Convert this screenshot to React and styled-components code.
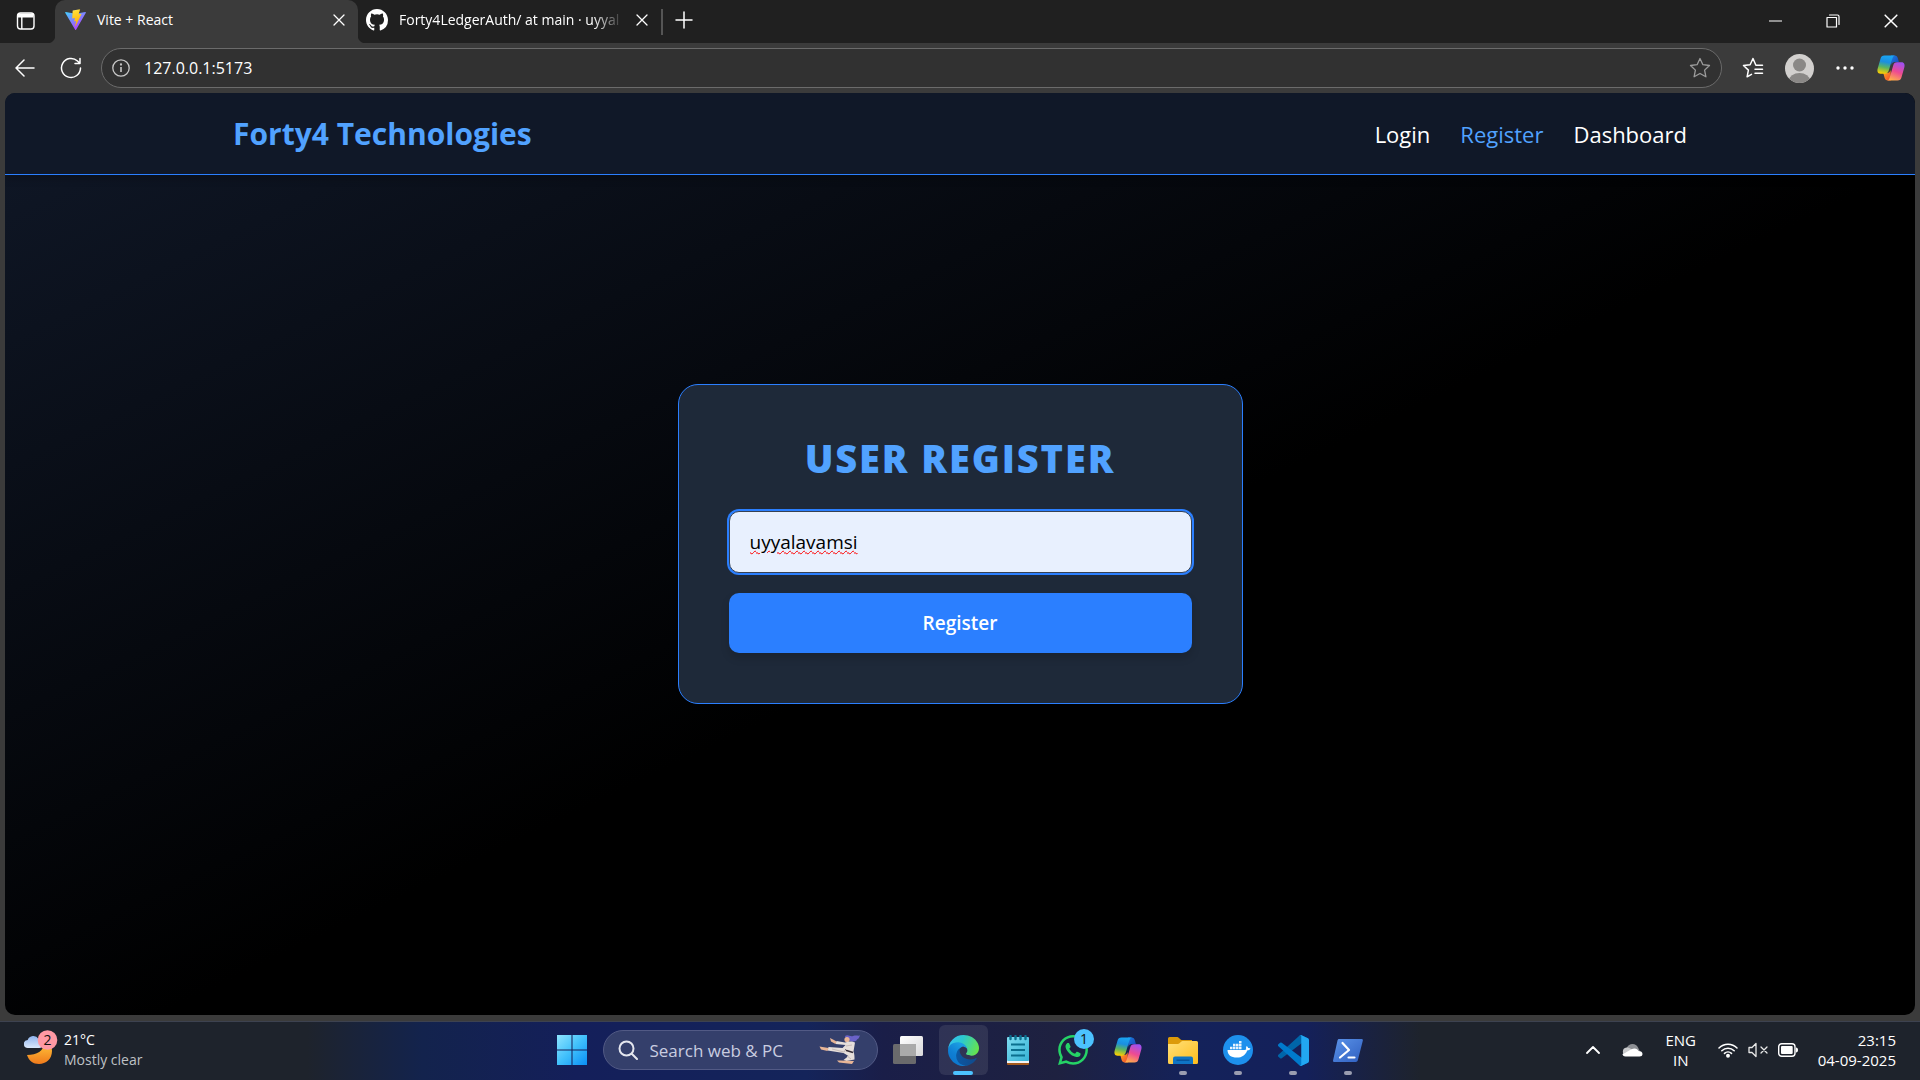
import React, { useState } from 'react';
import styled, { createGlobalStyle } from 'styled-components';

const Global = createGlobalStyle`
  *, *::before, *::after { box-sizing: border-box; }
  html, body, #root { height: 100%; }
  body { margin: 0; background: #000; color: #fff; font-family: "Open Sans", "Noto Sans", sans-serif; }
  button, input { font: inherit; color: inherit; margin: 0; }
  button { background: none; border: 0; padding: 0; cursor: pointer; }
  svg { display: block; flex: none; }
`;

/* ---------- window ---------- */
const Screen = styled.div`
  min-height: 100vh;
  display: flex;
  flex-direction: column;
`;
const Browser = styled.div`
  flex: 1;
  display: flex;
  flex-direction: column;
  background: #3b3b3b;
`;
const TabStrip = styled.div`
  height: 43px;
  display: flex;
  background: #202020;
`;
const TabMenu = styled.button`
  width: 55px;
  display: grid;
  place-items: center;
  padding: 0 4px 2px 0;
`;
const Tab = styled.div`
  position: relative;
  width: 303px;
  display: flex;
  align-items: center;
  gap: 11px;
  padding: 0 12px 4px ${(p) => (p.$active ? 10 : 8)}px;
  border-radius: 10px 10px 0 0;
  background: ${(p) => (p.$active ? '#3b3b3b' : 'transparent')};
  &::before, &::after {
    content: '';
    display: ${(p) => (p.$active ? 'block' : 'none')};
    position: absolute;
    bottom: 0;
    width: 8px;
    height: 8px;
  }
  &::before { right: 100%; background: radial-gradient(circle at 0 0, transparent 8px, #3b3b3b 9px); }
  &::after { left: 100%; background: radial-gradient(circle at 100% 0, transparent 8px, #3b3b3b 9px); }
`;
const TabTitle = styled.span`
  flex: 1;
  font-size: 14px;
  line-height: 20px;
  white-space: nowrap;
  mask-image: ${(p) => (p.$fade ? 'linear-gradient(90deg, #000 86%, transparent)' : 'none')};
`;
const IconButton = styled.button`
  display: grid;
  place-items: center;
  width: ${(p) => p.$w}px;
  height: ${(p) => p.$h}px;
`;
const TabDivider = styled.span`
  width: 2px;
  height: 26px;
  margin-top: 9px;
  background: #555;
`;
const WindowControls = styled.div`
  margin-left: auto;
  display: flex;
`;
const Toolbar = styled.div`
  height: 50px;
  display: flex;
  align-items: center;
  padding: 0 6px 0 2px;
`;
const AddressBar = styled.label`
  flex: 1;
  height: 40px;
  margin-left: 7px;
  display: flex;
  align-items: center;
  gap: 14px;
  padding: 0 10px;
  border: 1px solid #6b6b6b;
  border-radius: 20px;
  background: #313131;
`;
const AddressInput = styled.input`
  flex: 1;
  border: 0;
  outline: 0;
  padding: 0;
  background: transparent;
  font-size: 16px;
  line-height: 24px;
`;
const ToolbarActions = styled.div`
  display: flex;
  align-items: center;
  margin-left: 8px;
`;

/* ---------- site ---------- */
const Page = styled.div`
  flex: 1;
  margin: 0 5px 6px;
  display: flex;
  flex-direction: column;
  border-radius: 10px;
  overflow: hidden;
  background: linear-gradient(to bottom right, #101828, #000 54%, #000);
`;
const Header = styled.header`
  height: 82px;
  background: #101828;
  border-bottom: 1px solid #2b7fff;
  box-shadow: 0 4px 8px rgba(0, 0, 0, 0.2);
`;
const HeaderInner = styled.div`
  height: 100%;
  max-width: 1534px;
  margin: 0 auto;
  padding: 0 40px;
  display: flex;
  align-items: center;
  justify-content: space-between;
`;
const Brand = styled.h1`
  margin: 0;
  font-size: 30px;
  line-height: 40px;
  font-weight: 700;
  color: #51a2ff;
`;
const Nav = styled.nav`
  display: flex;
  gap: 30px;
`;
const NavLink = styled.a`
  font-size: 22px;
  line-height: 30px;
  text-decoration: none;
  color: ${(p) => (p.$active ? '#51a2ff' : '#fff')};
`;
const Main = styled.main`
  flex: 1;
  display: grid;
  place-items: center;
  align-content: center;
  padding: 20px 20px 122px;
`;
const Card = styled.form`
  width: 100%;
  max-width: 565px;
  padding: 50px;
  display: flex;
  flex-direction: column;
  gap: 20px;
  border: 1px solid #2b7fff;
  border-radius: 20px;
  background: #1e2939;
`;
const CardTitle = styled.h2`
  margin: 0 0 10px;
  text-align: center;
  text-transform: uppercase;
  font-size: 38px;
  line-height: 46px;
  font-weight: 800;
  letter-spacing: 0.05em;
  color: #51a2ff;
`;
const UserInput = styled.input`
  width: 100%;
  height: 62px;
  padding: 0 20px;
  border: 1px solid #364153;
  border-radius: 10px;
  outline: 0;
  box-shadow: 0 0 0 2px #2b7fff;
  background: #e8f0fe;
  color: #000;
  font-size: 19px;
  text-decoration: underline wavy #f00 1px;
`;
const SubmitButton = styled.button`
  height: 60px;
  border-radius: 10px;
  background: #2b7fff;
  color: #fff;
  font-size: 19px;
  font-weight: 600;
  box-shadow: 0 5px 8px rgba(0, 0, 0, 0.15);
`;

/* ---------- taskbar ---------- */
const Taskbar = styled.footer`
  height: 59px;
  display: grid;
  grid-template-columns: 1fr auto 1fr;
  align-items: center;
  padding-bottom: 2px;
  border-top: 1px solid #3d4250;
  background: linear-gradient(90deg, #1e232c 0%, #1e232c 16%, #13234d 22%, #141f5a 30%, #14245a 42%, #1a1e48 46%, #1e2140 55%, #14225a 62%, #14205a 68%, #1e232c 74%, #1e232c 100%);
`;
const Weather = styled.button`
  justify-self: start;
  display: flex;
  gap: 6px;
  padding-left: 24px;
  text-align: left;
  font-size: 14px;
  line-height: 20px;
`;
const Muted = styled.div`
  color: #bfc1c5;
`;
const Apps = styled.div`
  display: flex;
  align-items: center;
  gap: 6px;
`;
const AppButton = styled.button`
  width: 49px;
  height: 50px;
  display: grid;
  place-items: center;
  position: relative;
  border-radius: 6px;
  background: ${(p) => (p.$active ? 'rgba(255,255,255,.09)' : 'transparent')};
  &::after {
    content: '';
    position: absolute;
    bottom: 0;
    width: ${(p) => (p.$active ? 20 : 8)}px;
    height: 4px;
    border-radius: 2px;
    background: ${(p) => (p.$active ? '#4cc2ff' : p.$running ? '#9a9db0' : 'transparent')};
  }
`;
const Search = styled.label`
  width: 275px;
  height: 40px;
  display: flex;
  align-items: center;
  gap: 12px;
  padding: 0 16px 0 14px;
  border: 1px solid #525a85;
  border-radius: 20px;
  background: #343f6b;
`;
const SearchInput = styled.input`
  flex: 1;
  min-width: 0;
  border: 0;
  outline: 0;
  padding: 0;
  background: transparent;
  font-size: 17px;
  &::placeholder { color: #c9cde0; opacity: 1; }
`;
const Tray = styled.div`
  justify-self: end;
  display: flex;
  align-items: center;
  padding-right: 24px;
  font-size: 15px;
  line-height: 20px;
`;
const Language = styled.button`
  width: 58px;
  text-align: center;
`;
const Status = styled.button`
  display: flex;
  align-items: center;
  gap: 10px;
  margin: 0 20px 0 8px;
`;
const Clock = styled.button`
  text-align: right;
`;

/* ---------- drawings ---------- */
const Line = ({ w, h = w, box, d, color = '#fff', sw = 1.5 }) => (
  <svg width={w} height={h} viewBox={box || `0 0 ${w} ${h}`} fill="none" stroke={color} strokeWidth={sw} strokeLinecap="round" strokeLinejoin="round"><path d={d} /></svg>
);
const CloseIcon = ({ s = 12 }) => <Line w={s} box="0 0 12 12" d="M1 1l10 10M11 1L1 11" sw={1.3} />;
const TabsIcon = () => (
  <svg width="20" height="20" viewBox="0 0 20 20" fill="none" stroke="#fff" strokeWidth="1.4"><rect x="1.5" y="2" width="16.5" height="16" rx="3" /><path d="M2 4.5h15.5" strokeWidth="4" /><path d="M5.8 6v12" /></svg>
);
const ViteIcon = () => (
  <svg width="21" height="21" viewBox="0 0 32 32">
    <defs>
      <linearGradient id="va" x1="0" y1="0" x2="0.7" y2="1"><stop stopColor="#41d1ff" /><stop offset="1" stopColor="#bd34fe" /></linearGradient>
      <linearGradient id="vb" x1="0.4" y1="0" x2="0.6" y2="1"><stop stopColor="#ffea83" /><stop offset=".1" stopColor="#ffdd35" /><stop offset="1" stopColor="#ffa800" /></linearGradient>
    </defs>
    <path d="M31.8 5.7L16.9 31.6c-.3.5-1.1.5-1.4 0L.3 5.7c-.3-.6.2-1.3.8-1.2l15 2.6 14.8-2.6c.7-.1 1.2.6.9 1.2z" fill="url(#va)" />
    <path d="M23 .2L12 2.3c-.2 0-.3.2-.3.4L11 14c0 .3.2.5.5.4l3-.7c.3 0 .6.2.5.5l-.9 4.3c-.1.3.2.6.5.5l1.8-.6c.3-.1.6.2.5.5l-1.4 6.8c-.1.4.4.7.7.3l8.8-18.1c.2-.3-.1-.6-.5-.6l-3 .6c-.3.1-.5-.2-.5-.5l2-6.8c.1-.3-.1-.5-.5-.4z" fill="url(#vb)" />
  </svg>
);
const GithubIcon = () => (
  <svg width="22" height="22" viewBox="0 0 16 16" fill="#fff"><path d="M8 0C3.58 0 0 3.58 0 8c0 3.54 2.29 6.53 5.47 7.59.4.07.55-.17.55-.38 0-.19-.01-.82-.01-1.49-2.01.37-2.53-.49-2.69-.94-.09-.23-.48-.94-.82-1.13-.28-.15-.68-.52-.01-.53.63-.01 1.08.58 1.23.82.72 1.21 1.87.87 2.33.66.07-.52.28-.87.51-1.07-1.78-.2-3.64-.89-3.64-3.95 0-.87.31-1.59.82-2.15-.08-.2-.36-1.02.08-2.12 0 0 .67-.21 2.2.82a7.6 7.6 0 0 1 4 0c1.53-1.04 2.2-.82 2.2-.82.44 1.1.16 1.92.08 2.12.51.56.82 1.27.82 2.15 0 3.07-1.87 3.75-3.65 3.95.29.25.54.73.54 1.48 0 1.07-.01 1.93-.01 2.2 0 .21.15.46.55.38A8 8 0 0 0 16 8c0-4.42-3.58-8-8-8z" /></svg>
);
const InfoIcon = () => (
  <svg width="18" height="18" viewBox="0 0 18 18" fill="none" stroke="#c8c8c8" strokeWidth="1.3"><circle cx="9" cy="9" r="8.2" /><path d="M9 8v5" strokeWidth="1.6" /><circle cx="9" cy="5.5" r=".5" /></svg>
);
const Avatar = () => (
  <svg width="29" height="29" viewBox="0 0 29 29"><defs><clipPath id="av"><circle cx="14.5" cy="14.5" r="14.5" /></clipPath></defs><g clipPath="url(#av)"><path d="M0 0h29v29H0z" fill="#d2d0ce" /><circle cx="14.5" cy="11" r="6.5" fill="#8a8886" /><ellipse cx="14.5" cy="26.5" rx="10.5" ry="7.5" fill="#8a8886" /></g></svg>
);
const Dots = () => (
  <svg width="18" height="4" viewBox="0 0 18 4" fill="#fff"><circle cx="2" cy="2" r="1.7" /><circle cx="9" cy="2" r="1.7" /><circle cx="16" cy="2" r="1.7" /></svg>
);
const CopilotIcon = ({ id, s = 28 }) => (
  <svg width={s} height={s} viewBox="0 0 28 28">
    <defs>
      <linearGradient id={id + 'a'} x1="0.5" y1="0" x2="0.3" y2="1"><stop stopColor="#1aa5f2" /><stop offset=".35" stopColor="#1b8fe0" /><stop offset=".65" stopColor="#5cb560" /><stop offset="1" stopColor="#ffd000" /></linearGradient>
      <linearGradient id={id + 'b'} x1="0.7" y1="0" x2="0.3" y2="1"><stop stopColor="#a050f0" /><stop offset=".5" stopColor="#ee4a92" /><stop offset="1" stopColor="#ffb04a" /></linearGradient>
      <linearGradient id={id + 'c'} x1="0" y1="0" x2="1" y2="1"><stop stopColor="#1b7de0" /><stop offset="1" stopColor="#1a44b8" /></linearGradient>
      <linearGradient id={id + 'd'} x1="0" y1="0" x2="1" y2="1"><stop stopColor="#ffb020" /><stop offset="1" stopColor="#f0452e" /></linearGradient>
    </defs>
    <path d="M14 1.5h3.500c2 0 2.900 1.300 3.400 3l1 3.500h-4c-2 0-3 1-3.500 3z" fill={`url(#${id}c)`} />
    <path d="M14 26.500h-3c-2 0-3-1.300-3.500-3L6.300 19H10c2 0 3-1 3.600-3z" fill={`url(#${id}d)`} />
    <path d="M7.500 1.500h10.800c-1.600 0-2.300 1-2.900 3l-3.600 12c-.7 2-1.500 3.200-4 3.200H3.500C.5 19.700 0 17 .7 14.500L3.500 4.800c.6-2.200 1.700-3.300 4-3.300z" fill={`url(#${id}a)`} />
    <path d="M20.500 26.500H9.800c1.600 0 2.300-1 2.900-3l3.500-12c.7-2 1.500-3.200 4-3.200h4.300c3 0 3.500 2.700 2.800 5.200l-2.800 9.700c-.6 2.200-1.700 3.300-4 3.300z" fill={`url(#${id}b)`} />
  </svg>
);
const WeatherIcon = () => (
  <svg width="34" height="36" viewBox="0 0 34 36">
    <defs><linearGradient id="mo" x1="0" y1="0" x2="0" y2="1"><stop stopColor="#ffc53a" /><stop offset="1" stopColor="#f07a1c" /></linearGradient><linearGradient id="cl" x1="0" y1="0" x2="0" y2="1"><stop stopColor="#8fb4ee" /><stop offset="1" stopColor="#dbe8fb" /></linearGradient></defs>
    <path d="M20 13c0 8-7 12-17 12 2 6 6 9 12 9 7 0 13-5 13-13 0-3-1-5-2-7z" fill="url(#mo)" />
    <path d="M4 18a4 4 0 0 1-.3-8A6 6 0 0 1 14.500 9c3 0 4.500 2 4.500 4.500S17.500 18 15 18z" fill="url(#cl)" />
    <circle cx="23.500" cy="10" r="9.800" fill="#ff99a4" />
    <text x="23.500" y="15" textAnchor="middle" fontSize="14" fill="#111" fontFamily="Open Sans">2</text>
  </svg>
);
const WindowsIcon = () => (
  <svg width="30" height="30" viewBox="0 0 29 29"><defs><linearGradient id="wi" gradientUnits="userSpaceOnUse" x1="0" y1="0" x2="29" y2="29"><stop stopColor="#8fe4ff" /><stop offset=".5" stopColor="#40c0fb" /><stop offset="1" stopColor="#0a8ff5" /></linearGradient></defs><path d="M0 0h14v14H0zM15 0h14v14H15zM0 15h14v14H0zM15 15h14v14H15z" fill="url(#wi)" /></svg>
);
const KarateIcon = () => (
  <svg width="42" height="30" viewBox="0 0 42 30">
    <path d="M26 1c3-2 5 1 8 0s5 0 7-.5c-1 2-1 3-3 4 0 1-2 2-4 2-3 0-5-2-7-2z" fill="#6a62c8" />
    <circle cx="28" cy="4.500" r="2.600" fill="#e8b596" />
    <path d="M26 7.500c3-1.500 8-1.500 10 0l-1.500 9c1 3 1 5 1 8l-8 1.500-3-1 5-4-5-3-16-2.500 1-3.500 14 1 3-3-10-1 1-3z" fill="#e6dfdb" />
    <path d="M26 15l8 2.500" stroke="#332b35" strokeWidth="1.600" />
    <path d="M16.500 9L12 6.500 11 3l3 1.500 3.500 2zM8.500 16L2 14.500.5 11.500l3 .5 6 1zM21 25.500h-3l2 2 13 1.500 2-3z" fill="#e8b596" />
    <path d="M13 14l12 3 3-3M27 11l6-1M28 21l4 3" stroke="#c7bcb8" strokeWidth="1" fill="none" />
  </svg>
);
const TaskViewIcon = () => (
  <svg width="30" height="28" viewBox="0 0 30 28"><defs><linearGradient id="tv" x1="0" y1="0" x2="1" y2="1"><stop stopColor="#fff" /><stop offset="1" stopColor="#d8d8da" /></linearGradient></defs><rect y="8" width="23" height="20" rx="1.500" fill="#6a6a6c" /><rect x="7" width="23" height="20" rx="1.500" fill="url(#tv)" /><path d="M7 8h16v12H7z" fill="#aaa" /></svg>
);
const EdgeIcon = () => (
  <svg width="31" height="31" viewBox="0 0 256 256">
    <defs>
      <linearGradient id="ea" x1="0" y1=".5" x2="1" y2=".6"><stop stopColor="#0c59a4" /><stop offset="1" stopColor="#114a8b" /></linearGradient>
      <linearGradient id="eb" x1=".7" y1=".2" x2=".2" y2="1"><stop stopColor="#1b9de2" /><stop offset=".5" stopColor="#0f7fd4" /><stop offset="1" stopColor="#0b73c9" /></linearGradient>
      <linearGradient id="ec" x1="0" y1=".3" x2="1" y2=".6"><stop stopColor="#35c1f1" /><stop offset=".4" stopColor="#2cc9cf" /><stop offset="1" stopColor="#66e34c" /></linearGradient>
    </defs>
    <path d="M231 190.500c-3.400 1.800-6.900 3.400-10.500 4.700a101.700 101.700 0 0 1-36 6.500c-47.300 0-88.600-32.500-88.600-74.400 0-11.400 6.400-22 16.700-27.400-42.800 1.800-53.800 46.400-53.800 72.600 0 73.900 68.100 81.400 82.800 81.400 7.900 0 19.800-2.300 27-4.600l1.300-.4a128.300 128.300 0 0 0 66.600-52.800c2-3-2-7.500-5.500-5.600z" fill="url(#ea)" />
    <path d="M105.700 241.400A79.200 79.200 0 0 1 83 220.100 80.700 80.700 0 0 1 112.600 100c3.100-1.500 8.500-4.100 15.600-4a32.400 32.400 0 0 1 25.700 13 31.900 31.900 0 0 1 6.300 18.700c0-.2 24.500-79.600-80-79.600-43.900 0-80 41.600-80 78.200-.2 19.300 4 38.500 12.100 56a128 128 0 0 0 156.400 67 75.500 75.500 0 0 1-62-8z" fill="url(#eb)" />
    <path d="M152.300 148.900c-.8 1-3.300 2.500-3.300 5.700 0 2.600 1.700 5.100 4.700 7.200 14.400 10 41.500 8.700 41.600 8.700a59.600 59.600 0 0 0 30.300-8.400A61.400 61.400 0 0 0 256 109.200c.2-22.400-8-37.300-11.300-43.900C223.500 23.900 177.700 0 128 0A128 128 0 0 0 0 126.200c.5-36.500 36.800-66 80-66 3.500 0 23.500.3 42 10 16.300 8.600 24.900 18.900 30.800 29.200 6.200 10.700 7.300 24.100 7.300 29.500 0 5.300-2.700 13.300-7.800 20z" fill="url(#ec)" />
  </svg>
);
const NotepadIcon = () => (
  <svg width="24" height="31" viewBox="0 0 24 31"><defs><linearGradient id="np" x1="0" y1="0" x2="1" y2="1"><stop stopColor="#7fdcf0" /><stop offset="1" stopColor="#35b2d5" /></linearGradient></defs><path d="M1 25h22v4a1 1 0 0 1-1 1H2a1 1 0 0 1-1-1z" fill="#a55a1c" /><path d="M1 24h22v4H1z" fill="#f3f3f3" /><rect x="1" y="2" width="22" height="24" rx="1" fill="url(#np)" /><path d="M4.500 1v3M9.500 1v3M14.500 1v3M19.500 1v3" stroke="#0b6f8e" strokeWidth="2.400" strokeLinecap="round" /><path d="M5 9.500h14M5 15h14M5 20.500h14" stroke="#0b6f8e" strokeWidth="2" /></svg>
);
const WhatsappIcon = () => (
  <svg width="42" height="42" viewBox="0 0 42 42">
    <path transform="translate(6 6) scale(1.250)" fill="#25d366" d="M17.472 14.382c-.297-.149-1.758-.867-2.030-.967-.273-.099-.471-.148-.670.150-.197.297-.767.966-.940 1.164-.173.199-.347.223-.644.075-.297-.150-1.255-.463-2.390-1.475-.883-.788-1.480-1.761-1.653-2.059-.173-.297-.018-.458.130-.606.134-.133.298-.347.446-.520.149-.174.198-.298.298-.497.099-.198.050-.371-.025-.520-.075-.149-.669-1.612-.916-2.207-.242-.579-.487-.500-.669-.510-.173-.008-.371-.010-.570-.010-.198 0-.520.074-.792.372-.272.297-1.040 1.016-1.040 2.479 0 1.462 1.065 2.875 1.213 3.074.149.198 2.096 3.200 5.077 4.487.709.306 1.262.489 1.694.625.712.227 1.360.195 1.871.118.571-.085 1.758-.719 2.006-1.413.248-.694.248-1.289.173-1.413-.074-.124-.272-.198-.570-.347m-5.421 7.403h-.004a9.870 9.870 0 0 1-5.031-1.378l-.361-.214-3.741.982.998-3.648-.235-.374a9.860 9.860 0 0 1-1.510-5.260c.001-5.450 4.436-9.884 9.888-9.884 2.640 0 5.122 1.030 6.988 2.898a9.825 9.825 0 0 1 2.893 6.994c-.003 5.450-4.437 9.884-9.885 9.884m8.413-18.297A11.815 11.815 0 0 0 12.050 0C5.495 0 .160 5.335.157 11.892c0 2.096.547 4.142 1.588 5.945L.057 24l6.305-1.654a11.882 11.882 0 0 0 5.683 1.448h.005c6.554 0 11.890-5.335 11.893-11.893a11.821 11.821 0 0 0-3.480-8.413z" />
    <circle cx="32" cy="10" r="10" fill="#4cc2ff" /><text x="32" y="15" textAnchor="middle" fontSize="14" fill="#111" fontFamily="Open Sans">1</text>
  </svg>
);
const FolderIcon = () => (
  <svg width="30" height="27" viewBox="0 0 30 27"><defs><linearGradient id="fo" x1="0" y1="0" x2="1" y2="1"><stop stopColor="#ffe07a" /><stop offset="1" stopColor="#ffbd1c" /></linearGradient></defs><path d="M0 1.500A1.500 1.500 0 0 1 1.500 0h8c1 0 3 3 4 3H24v8H0z" fill="#dc9a0a" /><path d="M0 7h10c1.500 0 3-3 4.500-3h14A1.500 1.500 0 0 1 30 5.500v20a1.500 1.500 0 0 1-1.500 1.500h-27A1.500 1.500 0 0 1 0 25.500z" fill="url(#fo)" /><path d="M5 27v-5.500a2 2 0 0 1 2-2h16a2 2 0 0 1 2 2V27z" fill="#0f74c4" /><path d="M8.500 23.200h13" stroke="#064f95" strokeWidth="1.300" /></svg>
);
const DockerIcon = () => (
  <svg width="30" height="30" viewBox="0 0 30 30"><circle cx="15" cy="15" r="15" fill="#1d90ed" /><path d="M4.500 15h17c.8 0 1.500-.3 1.800-.8-.5-1.200-.2-2.500.4-3.300.9.500 1.300 1.300 1.400 2.200.9-.2 1.800 0 2.400.4-.5 1.300-1.800 1.900-3.300 1.900C22.500 20 19 22.500 14 22.500c-6 0-9.500-2.500-9.500-7.500z" fill="#fff" /><path d="M7 11.700h2.500v2.500H7zM10 11.700h2.500v2.500H10zM13 11.700h2.500v2.500H13zM16 11.700h2.500v2.500H16zM10 8.800h2.500v2.400H10zM13 8.800h2.500v2.400H13zM16 8.800h2.500v2.400H16zM16 6h2.500v2.300H16z" fill="#fff" opacity=".9" /></svg>
);
const VscodeIcon = () => (
  <svg width="31" height="31" viewBox="0 0 100 100"><path d="M96.500 10.800L75.900.9a6.200 6.200 0 0 0-7.100 1.200L1.300 63.600a4.200 4.200 0 0 0 0 6.200l5.500 5a4.200 4.200 0 0 0 5.300.2L93.400 13.400c2.700-2.100 6.600-.1 6.600 3.300v-.3a6.300 6.300 0 0 0-3.500-5.600z" fill="#0065a9" /><path d="M96.500 89.200L75.900 99.100a6.200 6.200 0 0 1-7.100-1.200L1.300 36.400a4.200 4.200 0 0 1 0-6.200l5.500-5a4.200 4.200 0 0 1 5.300-.2l81.300 61.600c2.700 2.100 6.600.1 6.600-3.300v.3a6.300 6.300 0 0 1-3.500 5.600z" fill="#007acc" /><path d="M75.900 99.100a6.200 6.200 0 0 1-7.100-1.200c2.300 2.300 6.200.7 6.200-2.600V4.700c0-3.300-3.900-4.900-6.200-2.600a6.200 6.200 0 0 1 7.100-1.200l20.600 9.900A6.300 6.300 0 0 1 100 16.400v67.200a6.300 6.300 0 0 1-3.500 5.600z" fill="#22a7f2" /></svg>
);
const PowershellIcon = () => (
  <svg width="30" height="23" viewBox="0 0 30 23"><defs><linearGradient id="ps" x1="0" y1="0" x2="1" y2="1"><stop stopColor="#5b93e8" /><stop offset="1" stopColor="#2f5fc0" /></linearGradient></defs><path d="M6 0h22.500c1 0 1.600.8 1.300 1.800l-5 19.500c-.3 1-1 1.700-2 1.700H1.300C.4 23-.2 22.200.1 21.200L4.500 1.500C4.700.6 5.200 0 6 0z" fill="url(#ps)" /><path d="M9.500 4l6.500 7-9 7.500M15.500 18.500h6" stroke="#fff" strokeWidth="2.200" fill="none" strokeLinecap="round" strokeLinejoin="round" /></svg>
);
const CloudIcon = () => (
  <svg width="21" height="14" viewBox="0 0 21 14"><path d="M5 4.500A6 6 0 0 1 16 4.500l2 4H4z" fill="#8d8f94" /><path d="M4.500 13a4.300 4.300 0 0 1 0-8.500c2 0 3.500.5 5 1.700l7 6z" fill="#c9cacc" /><path d="M3.500 13.500C1.500 13.500.5 12 .5 11c4-1 8-5.500 12-5.500 2 0 3.300 1 4 2.500 2.500 0 4 1.300 4 3s-1.200 2.500-3 2.500z" fill="#fff" /></svg>
);
const WifiIcon = () => (
  <svg width="20" height="16" viewBox="0 0 20 16" fill="none" stroke="#fff" strokeWidth="1.500" strokeLinecap="round"><path d="M1 6a12.500 12.500 0 0 1 18 0M3.800 8.800a8.800 8.800 0 0 1 12.400 0M6.500 11.400a5 5 0 0 1 7 0" /><circle cx="10" cy="13.700" r="1.200" fill="#fff" /></svg>
);
const MuteIcon = () => <Line w={20} h={16} d="M1 5.500h3l4-4v13l-4-4H1zM13 5l6 6M19 5l-6 6" color="#e8e8e8" sw={1.3} />;
const BatteryIcon = () => (
  <svg width="20" height="14" viewBox="0 0 20 14"><rect x=".7" y=".7" width="16.300" height="12.600" rx="3" fill="none" stroke="#fff" strokeWidth="1.400" /><rect x="3" y="3" width="11.700" height="8" rx="1" fill="#fff" /><path d="M18 4.500c1.300 0 2 1 2 2.500s-.7 2.500-2 2.500z" fill="#fff" /></svg>
);

const APPS = [
  { name: 'Task view', icon: <TaskViewIcon /> },
  { name: 'Microsoft Edge', icon: <EdgeIcon />, active: true },
  { name: 'Notepad', icon: <NotepadIcon /> },
  { name: 'WhatsApp', icon: <WhatsappIcon /> },
  { name: 'Copilot', icon: <CopilotIcon id="ct" /> },
  { name: 'File Explorer', icon: <FolderIcon />, running: true },
  { name: 'Docker Desktop', icon: <DockerIcon />, running: true },
  { name: 'Visual Studio Code', icon: <VscodeIcon />, running: true },
  { name: 'PowerShell', icon: <PowershellIcon />, running: true },
];

export default function App() {
  const [name, setName] = useState('uyyalavamsi');
  return (
    <Screen>
      <Global />
      <Browser>
        <TabStrip>
          <TabMenu aria-label="Tab actions"><TabsIcon /></TabMenu>
          <Tab $active><ViteIcon /><TabTitle>Vite + React</TabTitle><IconButton $w={14} $h={20} aria-label="Close tab"><CloseIcon /></IconButton></Tab>
          <Tab><GithubIcon /><TabTitle $fade>Forty4LedgerAuth/ at main · uyyal</TabTitle><IconButton $w={14} $h={20} aria-label="Close tab"><CloseIcon /></IconButton></Tab>
          <TabDivider />
          <IconButton $w={42} $h={40} aria-label="New tab"><Line w={18} d="M9 1v16M1 9h16" /></IconButton>
          <WindowControls>
            <IconButton $w={58} $h={42} aria-label="Minimize"><Line w={13} h={2} d="M0 1h13" sw={1} /></IconButton>
            <IconButton $w={58} $h={42} aria-label="Restore"><Line w={14} d="M1 3.500h9.500v9.500H1zM3.500 1h8a1.500 1.500 0 0 1 1.500 1.500v8" sw={1.2} /></IconButton>
            <IconButton $w={58} $h={42} aria-label="Close window"><CloseIcon s={14} /></IconButton>
          </WindowControls>
        </TabStrip>
        <Toolbar>
          <IconButton $w={46} $h={40} aria-label="Back"><Line w={20} h={18} d="M19 9H1M9 1L1 9l8 8" /></IconButton>
          <IconButton $w={46} $h={40} aria-label="Refresh"><Line w={22} d="M20.500 11a9.500 9.500 0 1 1-3-7l2 2M20 1.500V6.500h-5" /></IconButton>
          <AddressBar>
            <InfoIcon />
            <AddressInput aria-label="Address" defaultValue="127.0.0.1:5173" />
            <Line w={22} d="M11 1.500l2.900 6.200 6.600.8-4.900 4.600 1.300 6.700L11 16.500l-5.900 3.300 1.300-6.700L1.500 8.500l6.600-.8z" color="#9c9c9c" sw={1.3} />
          </AddressBar>
          <ToolbarActions>
            <IconButton $w={46} $h={40} aria-label="Favorites"><Line w={22} d="M20.500 8.300h-6.600L11 1.500 8.100 7.700l-6.600.8 4.900 4.600-1.300 6.700 4.400-2.500M13 12.300h7.500M13 16.300h7.500" /></IconButton>
            <IconButton $w={46} $h={40} aria-label="Profile"><Avatar /></IconButton>
            <IconButton $w={46} $h={40} aria-label="Settings"><Dots /></IconButton>
            <IconButton $w={46} $h={40} aria-label="Copilot"><CopilotIcon id="cb" /></IconButton>
          </ToolbarActions>
        </Toolbar>
        <Page>
          <Header>
            <HeaderInner>
              <Brand>Forty4 Technologies</Brand>
              <Nav>
                <NavLink href="#login">Login</NavLink>
                <NavLink href="#register" $active>Register</NavLink>
                <NavLink href="#dashboard">Dashboard</NavLink>
              </Nav>
            </HeaderInner>
          </Header>
          <Main>
            <Card onSubmit={(e) => e.preventDefault()}>
              <CardTitle>User Register</CardTitle>
              <UserInput aria-label="Username" value={name} onChange={(e) => setName(e.target.value)} />
              <SubmitButton type="submit">Register</SubmitButton>
            </Card>
          </Main>
        </Page>
      </Browser>
      <Taskbar>
        <Weather><WeatherIcon /><div>21°C<Muted>Mostly clear</Muted></div></Weather>
        <Apps>
          <AppButton aria-label="Start"><WindowsIcon /></AppButton>
          <Search>
            <Line w={20} d="M14 14l5 5M15.500 8.500a7 7 0 1 1-14 0 7 7 0 0 1 14 0" color="#e4e6ee" sw={2} />
            <SearchInput aria-label="Search" placeholder="Search web &amp; PC" />
            <KarateIcon />
          </Search>
          {APPS.map((a) => (
            <AppButton key={a.name} aria-label={a.name} $active={a.active} $running={a.running}>{a.icon}</AppButton>
          ))}
        </Apps>
        <Tray>
          <IconButton $w={42} $h={40} aria-label="Hidden icons"><Line w={14} h={8} d="M1 7l6-6 6 6" sw={1.8} /></IconButton>
          <IconButton $w={38} $h={40} aria-label="OneDrive"><CloudIcon /></IconButton>
          <Language>ENG<br />IN</Language>
          <Status aria-label="Network, sound and battery"><WifiIcon /><MuteIcon /><BatteryIcon /></Status>
          <Clock>23:15<br />04-09-2025</Clock>
        </Tray>
      </Taskbar>
    </Screen>
  );
}
